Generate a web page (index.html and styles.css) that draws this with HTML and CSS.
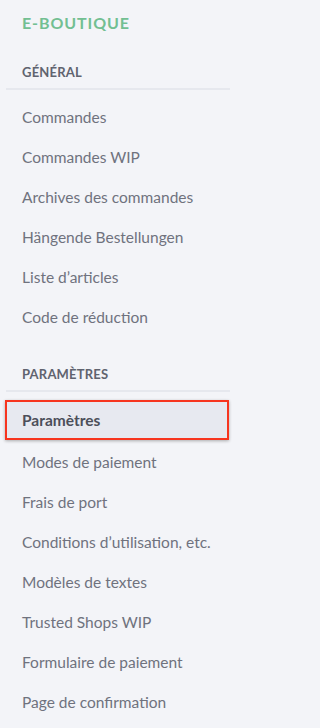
FILE: index.html
```html
<!DOCTYPE html>
<html lang="fr">
<head>
<meta charset="utf-8">
<link rel="stylesheet" href="styles.css">
</head>
<body>
<nav class="sidebar">
  <div class="brand">E-BOUTIQUE</div>
  <section class="group">
    <h2 class="group-title">GÉNÉRAL</h2>
    <ul class="menu">
      <li class="item">Commandes</li>
      <li class="item">Commandes WIP</li>
      <li class="item">Archives des commandes</li>
      <li class="item">Hängende Bestellungen</li>
      <li class="item">Liste d’articles</li>
      <li class="item">Code de réduction</li>
    </ul>
  </section>
  <section class="group group-second">
    <h2 class="group-title">PARAMÈTRES</h2>
    <ul class="menu menu-second">
      <li class="item item-active">Paramètres</li>
      <li class="item">Modes de paiement</li>
      <li class="item">Frais de port</li>
      <li class="item">Conditions d’utilisation, etc.</li>
      <li class="item">Modèles de textes</li>
      <li class="item">Trusted Shops WIP</li>
      <li class="item">Formulaire de paiement</li>
      <li class="item">Page de confirmation</li>
    </ul>
  </section>
</nav>
</body>
</html>
```
FILE: styles.css
```css
html, body {
  margin: 0;
  padding: 0;
  background: #f3f4f8;
}
body {
  width: 234px;
  height: 728px;
  overflow: hidden;
  font-family: Lato, "Open Sans", sans-serif;
  -webkit-font-smoothing: antialiased;
}
.sidebar {
  display: flex;
  flex-direction: column;
  padding: 0 4px 0 6px;
}
.brand {
  margin-top: 14px;
  padding-left: 16px;
  font-size: 16px;
  line-height: 18px;
  font-weight: 700;
  letter-spacing: 0.9px;
  color: #72bf92;
}
.group-title {
  margin: 0;
  padding: 2px 0 8px 16px;
  font-size: 13px;
  line-height: 16px;
  font-weight: 700;
  letter-spacing: 0.2px;
  color: #60636f;
  border-bottom: 2px solid #e6e8ee;
}
.group {
  margin-top: 30px;
}
.group-second {
  margin-top: 29px;
}
.menu {
  list-style: none;
  margin: 5px 0 0;
  padding: 0;
}
.menu-second {
  margin-top: 8px;
}
.item {
  box-sizing: border-box;
  height: 40px;
  padding: 3px 0 0 16px;
  line-height: 38px;
  font-size: 15.5px;
  color: #6f727e;
  white-space: nowrap;
}
.item-active {
  margin-left: -1px;
  margin-right: 1px;
  padding: 1px 0 0 15px;
  line-height: 35px;
  border: 2px solid #f7351f;
  background: #e7e9f0;
  box-shadow: 0 1px 3px rgba(0, 0, 0, 0.3);
  font-weight: 700;
  color: #4c4f5a;
}
```
